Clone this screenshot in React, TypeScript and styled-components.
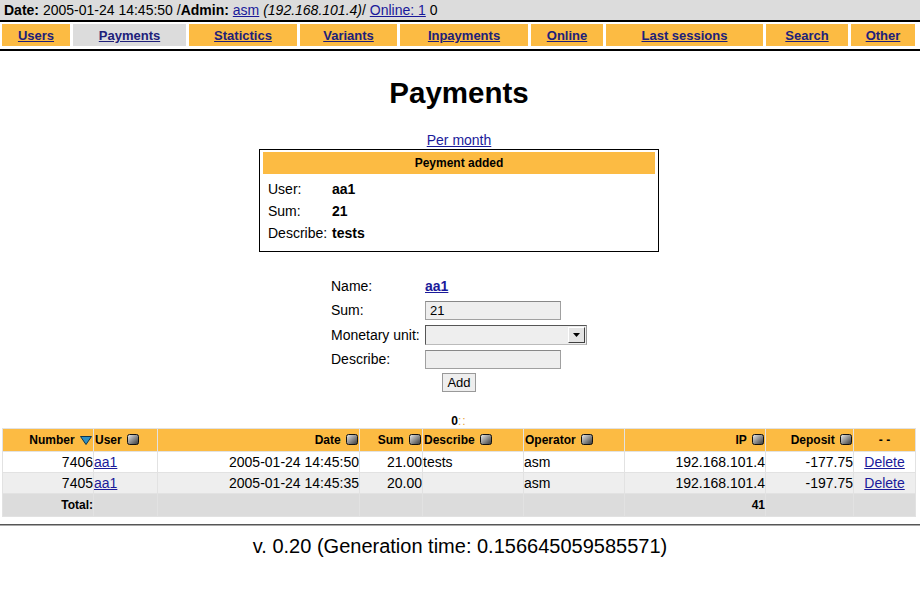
import React from 'react';
import styled, { createGlobalStyle } from 'styled-components';

const ORANGE = '#fcbb43';
const GREY = '#dcdcdc';
const LINK = '#1a1a9a';

const GlobalStyle = createGlobalStyle`
  html, body {
    margin: 0;
    padding: 0;
    background: #fff;
    font-family: "Liberation Sans", Arial, sans-serif;
    color: #000;
  }
`;

const TopBar = styled.div`
  height: 20px;
  line-height: 20px;
  padding: 0 4px;
  background: ${GREY};
  border-bottom: 2px solid #000;
  font-size: 14px;
  white-space: nowrap;
  b { font-weight: bold; }
  i { font-style: italic; }
`;

const TopLink = styled.a`
  color: ${LINK};
  text-decoration: underline;
`;

const NavBar = styled.nav`
  display: grid;
  grid-template-columns: 68px 113px 108px 97px 128px 72px 157px 82px 64px;
  column-gap: 3px;
  padding: 2px 0 3px 2px;
  border-bottom: 2px solid #000;
`;

const NavCell = styled.div<{ $active?: boolean }>`
  height: 22px;
  line-height: 22px;
  text-align: center;
  background: ${({ $active }) => ($active ? GREY : ORANGE)};
  a {
    color: #20207a;
    font-weight: bold;
    font-size: 13px;
    text-decoration: underline;
  }
`;

const Main = styled.main`
  padding: 0 4px 0 2px;
  text-align: center;
`;

const Title = styled.h1`
  margin: 26px 0 0;
  height: 32px;
  line-height: 32px;
  font-size: 29.5px;
  font-weight: bold;
`;

const PerMonth = styled.a`
  display: block;
  margin-top: 23px;
  line-height: 16px;
  font-size: 14px;
  color: ${LINK};
  text-decoration: underline;
`;

const Notice = styled.div`
  width: 392px;
  margin: 1px auto 0;
  padding: 2px 3px 7px;
  border: 1px solid #000;
  text-align: left;
`;

const NoticeHead = styled.div`
  height: 22px;
  line-height: 22px;
  background: ${ORANGE};
  text-align: center;
  font-size: 12px;
  font-weight: bold;
`;

const NoticeRows = styled.div`
  display: grid;
  grid-template-columns: 64px 1fr;
  grid-auto-rows: 22px;
  padding: 4px 0 0 5px;
  font-size: 14px;
  line-height: 22px;
  span:nth-child(even) { font-weight: bold; }
`;

const Form = styled.div`
  display: grid;
  grid-template-columns: 94px 162px;
  row-gap: 5px;
  width: 256px;
  margin: 25px auto 0;
  text-align: left;
  font-size: 14px;
  align-items: center;
`;

const FormLabel = styled.span`
  line-height: 19px;
`;

const NameLink = styled.a`
  color: ${LINK};
  font-weight: bold;
  text-decoration: underline;
  line-height: 19px;
`;

const TextInput = styled.div`
  box-sizing: border-box;
  width: 136px;
  height: 19px;
  padding: 0 4px;
  line-height: 17px;
  font-size: 13px;
  background: #eeeeee;
  border: 1px solid #a0a0a0;
  border-top-color: #888;
`;

const SelectBox = styled.div`
  box-sizing: border-box;
  display: flex;
  justify-content: flex-end;
  width: 162px;
  height: 20px;
  padding: 1px;
  background: #eeeeee;
  border: 1px solid #555;
  border-right-color: #999;
  border-bottom-color: #bbb;
`;

const SelectButton = styled.div`
  box-sizing: border-box;
  width: 17px;
  height: 16px;
  display: flex;
  align-items: center;
  justify-content: center;
  background: #e4e4e4;
  border: 1px solid;
  border-color: #fff #404040 #404040 #fff;
`;

const ButtonRow = styled.div`
  grid-column: 1 / span 2;
  display: flex;
  justify-content: center;
  margin-top: -1px;
`;

const AddButton = styled.button`
  height: 19px;
  padding: 0 4px;
  font-family: "Liberation Sans", Arial, sans-serif;
  font-size: 13px;
  background: #eeeeee;
  border: 1px solid #999;
  border-radius: 0;
  color: #000;
`;

const Pager = styled.div`
  margin-top: 21px;
  height: 16px;
  line-height: 16px;
  font-size: 12px;
  font-weight: bold;
  span { color: #e9a43a; font-weight: normal; letter-spacing: 1px; }
`;

const Table = styled.table`
  width: 914px;
  table-layout: fixed;
  border-collapse: separate;
  border-spacing: 1px;
  background: #e2e2e2;
  margin-top: -1px;
`;

const HeadCell = styled.th<{ $align?: string }>`
  height: 22px;
  padding: 0 1px;
  background: ${ORANGE};
  font-size: 12px;
  font-weight: bold;
  text-align: ${({ $align }) => $align || 'left'};
  white-space: nowrap;
  overflow: hidden;
  svg { vertical-align: -1px; margin-left: 2px; }
`;

const Row = styled.tr<{ $alt?: boolean }>`
  td {
    background: ${({ $alt }) => ($alt ? '#eeeeee' : '#ffffff')};
  }
`;

const Cell = styled.td<{ $align?: string }>`
  height: 20px;
  padding: 0;
  font-size: 14px;
  text-align: ${({ $align }) => $align || 'left'};
  white-space: nowrap;
  a { color: ${LINK}; text-decoration: underline; }
`;

const TotalCell = styled.td<{ $align?: string }>`
  height: 22px;
  padding: 0;
  background: ${GREY};
  font-size: 12px;
  font-weight: bold;
  text-align: ${({ $align }) => $align || 'left'};
`;

const Footer = styled.footer`
  margin-top: 7px;
  border-top: 2px groove #aaa;
  padding-top: 9px;
  text-align: center;
  font-size: 20px;
  line-height: 22px;
`;

const SortIcon = () => (
  <svg width="12" height="11" viewBox="0 0 12 11">
    <defs>
      <linearGradient id="sg" x1="0" y1="0" x2="1" y2="1">
        <stop offset="0" stopColor="#eeeeee" />
        <stop offset="1" stopColor="#333333" />
      </linearGradient>
    </defs>
    <rect x="0.5" y="0.5" width="11" height="10" rx="2" fill="url(#sg)" stroke="#111" />
  </svg>
);

const SortDown = () => (
  <svg width="12" height="9" viewBox="0 0 12 9">
    <path d="M0.5 0.5 H11.5 L6 8.5 Z" fill="#2f8fc0" stroke="#0b3550" strokeWidth="1" />
  </svg>
);

const navItems = ['Users', 'Payments', 'Statictics', 'Variants', 'Inpayments', 'Online', 'Last sessions', 'Search', 'Other'];

const rows = [
  { n: '7406', date: '2005-01-24 14:45:50', sum: '21.00', desc: 'tests', dep: '-177.75' },
  { n: '7405', date: '2005-01-24 14:45:35', sum: '20.00', desc: '', dep: '-197.75' },
];

const colWidths = [90, 63, 201, 62, 100, 100, 140, 87, 61];

export default function App() {
  return (
    <>
      <GlobalStyle />
      <TopBar>
        <b>Date:</b> 2005-01-24 14:45:50 /<b>Admin:</b> <TopLink href="#">asm</TopLink>{' '}
        <i>(192.168.101.4)</i>/ <TopLink href="#">Online: 1</TopLink> 0
      </TopBar>
      <NavBar>
        {navItems.map((n) => (
          <NavCell key={n} $active={n === 'Payments'}>
            <a href="#">{n}</a>
          </NavCell>
        ))}
      </NavBar>
      <Main>
        <Title>Payments</Title>
        <PerMonth href="#">Per month</PerMonth>
        <Notice>
          <NoticeHead>Peyment added</NoticeHead>
          <NoticeRows>
            <span>User:</span>
            <span>aa1</span>
            <span>Sum:</span>
            <span>21</span>
            <span>Describe:</span>
            <span>tests</span>
          </NoticeRows>
        </Notice>
        <Form>
          <FormLabel>Name:</FormLabel>
          <span><NameLink href="#">aa1</NameLink></span>
          <FormLabel>Sum:</FormLabel>
          <TextInput>21</TextInput>
          <FormLabel>Monetary unit:</FormLabel>
          <SelectBox>
            <SelectButton>
              <svg width="7" height="4" viewBox="0 0 7 4">
                <path d="M0 0 H7 L3.5 4 Z" fill="#000" />
              </svg>
            </SelectButton>
          </SelectBox>
          <FormLabel>Describe:</FormLabel>
          <TextInput />
          <ButtonRow>
            <AddButton>Add</AddButton>
          </ButtonRow>
        </Form>
        <Pager>
          0<span>::</span>
        </Pager>
        <Table>
          <colgroup>
            {colWidths.map((w, i) => (
              <col key={i} style={{ width: w }} />
            ))}
          </colgroup>
          <thead>
            <tr>
              <HeadCell $align="right">Number <SortDown /></HeadCell>
              <HeadCell>User <SortIcon /></HeadCell>
              <HeadCell $align="right">Date <SortIcon /></HeadCell>
              <HeadCell $align="right">Sum <SortIcon /></HeadCell>
              <HeadCell>Describe <SortIcon /></HeadCell>
              <HeadCell>Operator <SortIcon /></HeadCell>
              <HeadCell $align="right">IP <SortIcon /></HeadCell>
              <HeadCell $align="right">Deposit <SortIcon /></HeadCell>
              <HeadCell $align="center">- -</HeadCell>
            </tr>
          </thead>
          <tbody>
            {rows.map((r, i) => (
              <Row key={r.n} $alt={i % 2 === 1}>
                <Cell $align="right">{r.n}</Cell>
                <Cell><a href="#">aa1</a></Cell>
                <Cell $align="right">{r.date}</Cell>
                <Cell $align="right">{r.sum}</Cell>
                <Cell>{r.desc}</Cell>
                <Cell>asm</Cell>
                <Cell $align="right">192.168.101.4</Cell>
                <Cell $align="right">{r.dep}</Cell>
                <Cell $align="center"><a href="#">Delete</a></Cell>
              </Row>
            ))}
            <tr>
              <TotalCell $align="right">Total:</TotalCell>
              <TotalCell />
              <TotalCell />
              <TotalCell />
              <TotalCell />
              <TotalCell />
              <TotalCell $align="right">41</TotalCell>
              <TotalCell />
              <TotalCell />
            </tr>
          </tbody>
        </Table>
      </Main>
      <Footer>v. 0.20 (Generation time: 0.156645059585571)</Footer>
    </>
  );
}
